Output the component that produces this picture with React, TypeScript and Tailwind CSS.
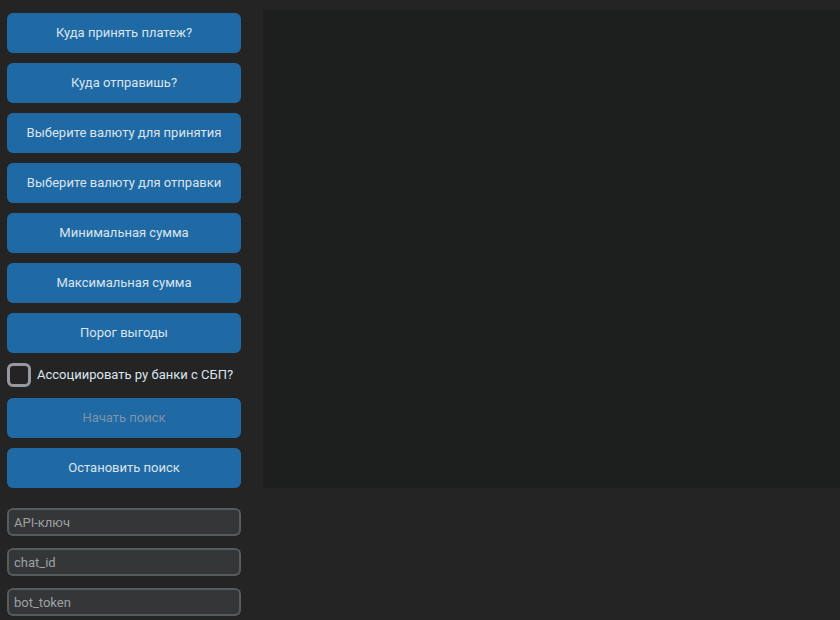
import React from 'react';

const actions = [
  'Куда принять платеж?',
  'Куда отправишь?',
  'Выберите валюту для принятия',
  'Выберите валюту для отправки',
  'Минимальная сумма',
  'Максимальная сумма',
  'Порог выгоды',
];

const fields = ['API-ключ', 'chat_id', 'bot_token'];

const Btn: React.FC<{ label: string; disabled?: boolean }> = ({ label, disabled }) => (
  <button
    className={
      'h-10 w-full rounded-md bg-[#1f6aa5] text-[13px] ' +
      (disabled ? 'text-[#7f93a6]' : 'text-[#dce4ee]')
    }
  >
    {label}
  </button>
);

const App: React.FC = () => {
  return (
    <div
      className="flex h-[620px] w-[840px] overflow-hidden bg-[#242424]"
      style={{ fontFamily: 'Roboto, "Noto Sans", sans-serif' }}
    >
      <div className="flex w-[263px] shrink-0 flex-col pl-[7px] pr-[22px] pt-[13px]">
        <div className="flex flex-col gap-[10px]">
          {actions.map((a) => (
            <Btn key={a} label={a} />
          ))}
        </div>
        <label className="mt-[10px] flex h-6 items-center gap-[6px]">
          <span className="h-6 w-6 rounded-md border-[3px] border-[#949a9f]" />
          <span className="text-[13px] text-[#dce4ee]">Ассоциировать ру банки с СБП?</span>
        </label>
        <div className="mt-[11px] flex flex-col gap-[10px]">
          <Btn label="Начать поиск" disabled />
          <Btn label="Остановить поиск" />
        </div>
        <div className="mt-[20px] flex flex-col gap-3">
          {fields.map((f) => (
            <input
              key={f}
              placeholder={f}
              className="h-7 w-full rounded-md border-2 border-[#565b5e] bg-[#343638] px-[5px] text-[13px] text-[#dce4ee] outline-none placeholder:text-[#9ea1a4]"
            />
          ))}
        </div>
      </div>
      <div className="flex flex-1 flex-col pt-[10px]">
        <div className="h-[478px] w-full bg-[#1d1e1e]" />
      </div>
    </div>
  );
};

export default App;
